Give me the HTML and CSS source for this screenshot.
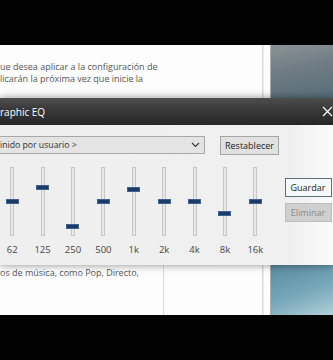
FILE: index.html
```html
<!DOCTYPE html>
<html lang="es">
<head>
  <meta charset="UTF-8" />
  <meta name="viewport" content="width=device-width, initial-scale=1" />
  <title>Graphic EQ</title>
  <link rel="stylesheet" href="styles.css">
</head>
<body>
  <div class="screen">
    <div class="blackband"></div>

    <div class="strip strip-top">
      <div class="backwin">
        <div class="backwin-col">
          <p class="backwin-text">ue desea aplicar a la configuración de<br>licarán la próxima vez que inicie la</p>
        </div>
        <div class="backwin-gutter"></div>
      </div>
      <div class="desktop desktop-top"></div>
    </div>

    <section class="eq">
      <header class="eq-title">
        <span>raphic EQ</span>
        <svg class="eq-close" width="11" height="11" viewBox="0 0 11 11">
          <path d="M1 1 L10 10 M10 1 L1 10" stroke="#fff" stroke-width="1.2" fill="none"/>
        </svg>
      </header>

      <div class="eq-body">
        <div class="eq-top">
          <div class="select">
            <span>inido por usuario &gt;</span>
            <svg width="9" height="6" viewBox="0 0 9 6">
              <path d="M1 1 L4.5 4.5 L8 1" stroke="#333" stroke-width="1.1" fill="none"/>
            </svg>
          </div>
          <button class="btn btn-reset">Restablecer</button>
        </div>

        <div class="eq-main">
          <div class="bands">
            <div class="band"><div class="track"><div class="thumb" style="top: 31px"></div></div><span>62</span></div>
            <div class="band"><div class="track"><div class="thumb" style="top: 17px"></div></div><span>125</span></div>
            <div class="band"><div class="track"><div class="thumb" style="top: 56px"></div></div><span>250</span></div>
            <div class="band"><div class="track"><div class="thumb" style="top: 31px"></div></div><span>500</span></div>
            <div class="band"><div class="track"><div class="thumb" style="top: 19px"></div></div><span>1k</span></div>
            <div class="band"><div class="track"><div class="thumb" style="top: 31px"></div></div><span>2k</span></div>
            <div class="band"><div class="track"><div class="thumb" style="top: 31px"></div></div><span>4k</span></div>
            <div class="band"><div class="track"><div class="thumb" style="top: 43px"></div></div><span>8k</span></div>
            <div class="band"><div class="track"><div class="thumb" style="top: 31px"></div></div><span>16k</span></div>
          </div>
          <div class="side">
            <button class="btn btn-save">Guardar</button>
            <button class="btn btn-delete" disabled>Eliminar</button>
          </div>
        </div>
      </div>
    </section>

    <div class="strip strip-bottom">
      <div class="backwin">
        <div class="backwin-col backwin-split">
          <p class="backwin-text">os de música, como Pop, Directo,</p>
        </div>
        <div class="backwin-col backwin-empty"></div>
        <div class="backwin-gutter"></div>
      </div>
      <div class="desktop desktop-bottom"></div>
    </div>

    <div class="blackband"></div>
  </div>
</body>
</html>
```

FILE: styles.css
```css
body {
  margin: 0;
  background-color: #000;
  font-family: 'Open Sans', 'Noto Sans', sans-serif;
}

.screen {
  width: 333px;
  height: 360px;
  overflow: hidden;
  display: flex;
  flex-direction: column;
}

.blackband {
  height: 45px;
  flex: none;
  background-color: #020202;
}

/* window behind the dialog */

.strip {
  display: grid;
  grid-template-columns: 271px 62px;
  flex: none;
}

.strip-top {
  height: 53px;
}

.strip-bottom {
  height: 50px;
}

.backwin {
  display: flex;
  background-color: #fdfdfd;
  border-right: 1px solid #a9adb0;
  box-sizing: border-box;
  overflow: hidden;
}

.backwin-col {
  flex: 1;
  border-right: 1px solid #d9d9d9;
}

.backwin-gutter {
  width: 6px;
  border-left: 1px solid #ececec;
}

.backwin-text {
  margin: 0;
  font-size: 9px;
  line-height: 11.5px;
  color: #555;
  white-space: nowrap;
}

.strip-top .backwin-text {
  padding-top: 16px;
}

.strip-bottom .backwin-text {
  padding-top: 2px;
}

.backwin-split {
  flex: 0 0 163px;
}

.desktop-top {
  background: linear-gradient(170deg, #8a9297 0%, #6f7c83 45%, #586e7a 100%);
}

.desktop-bottom {
  background: linear-gradient(160deg, #5a8a9f 0%, #78a8bb 55%, #b0cfd8 100%);
}

/* graphic EQ dialog */

.eq {
  position: relative;
  z-index: 1;
  flex: none;
  box-shadow: 0 0 8px rgba(0, 0, 0, 0.45);
}

.eq-title {
  height: 27px;
  display: flex;
  align-items: center;
  justify-content: space-between;
  background: linear-gradient(180deg, #4e4e4e 0%, #3a3a3a 40%, #262626 100%);
  color: #fff;
  font-size: 10px;
}

.eq-body {
  height: 140px;
  box-sizing: border-box;
  padding-top: 11px;
  background: linear-gradient(90deg, #efefef 0%, #f0f0f0 88%, #fbfbfb 100%);
}

.eq-top {
  display: flex;
  align-items: flex-start;
  height: 19px;
}

.select {
  width: 205px;
  height: 18px;
  box-sizing: border-box;
  display: flex;
  align-items: center;
  justify-content: space-between;
  padding-right: 4px;
  background-color: #e4e4e4;
  border: 1px solid #a8a8a8;
  border-left: none;
  font-size: 8.7px;
  color: #333;
}

.btn {
  font-family: inherit;
  font-size: 9px;
  padding: 0;
  height: 19px;
  box-sizing: border-box;
  border-radius: 0;
}

.btn-reset {
  margin-left: 15px;
  width: 59px;
  background-color: #e1e1e1;
  border: 1px solid #a6a6a6;
  color: #222;
}

.eq-main {
  display: flex;
  margin-top: 12px;
}

.bands {
  display: flex;
  margin-left: -3px;
}

.band {
  width: 30.4px;
  display: flex;
  flex-direction: column;
  align-items: center;
}

.track {
  position: relative;
  width: 4px;
  height: 69px;
  box-sizing: border-box;
  background-color: #e8e8e8;
  border: 1px solid #c6c6c6;
}

.thumb {
  position: absolute;
  left: -5.5px;
  width: 13px;
  height: 5px;
  box-sizing: border-box;
  background-color: #1c3a66;
  border: 1px solid #3f6190;
}

.band span {
  margin-top: 8px;
  font-size: 9.5px;
  line-height: 12px;
  color: #444;
}

.side {
  margin-left: 14px;
  padding-top: 11px;
  display: flex;
  flex-direction: column;
  gap: 6px;
}

.btn-save,
.btn-delete {
  width: 47px;
}

.btn-save {
  background-color: #f4f9fc;
  border: 1px solid #5e6f7c;
  color: #222;
}

.btn-delete {
  background-color: #cfcfcf;
  border: 1px solid #bdbdbd;
  color: #8a8a8a;
}
```
